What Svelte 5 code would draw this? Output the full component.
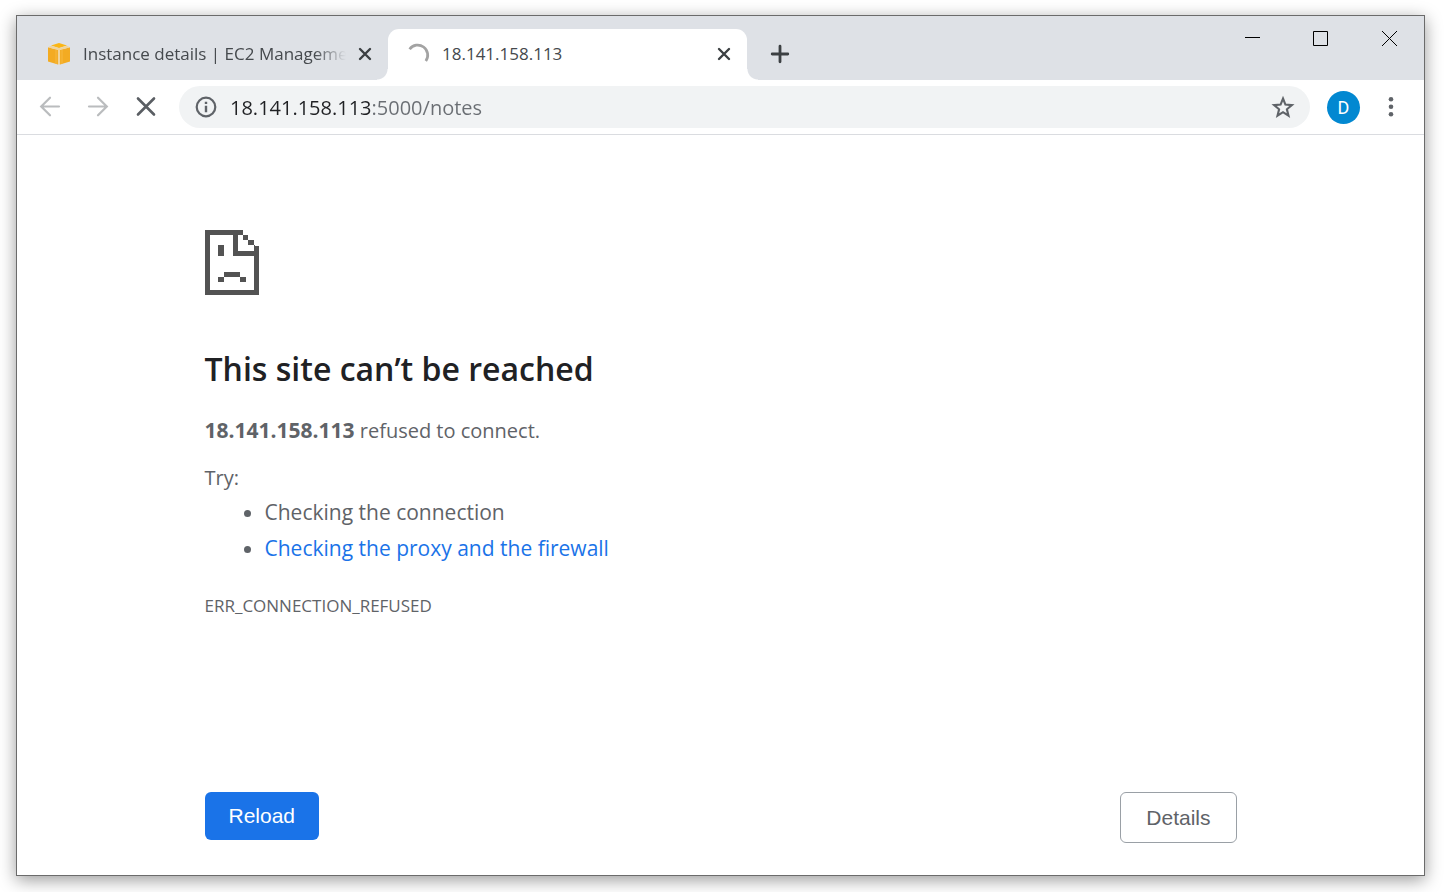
<script>
  let address = $state('18.141.158.113:5000/notes');
</script>

<div class="desktop">
  <div class="window">
    <header class="tabstrip">
      <div class="tab">
        <svg class="favicon" width="22" height="22" viewBox="0 0 22 22" aria-hidden="true">
          <path fill="#fbb615" d="M3 2.600 11 0l8 2.600-8 2.500z" />
          <path fill="#f3ab22" d="M0 4.200 10 7v14.600L0 18.600zM22 4.200 12 7v14.600l10-3z" />
          <path fill="#f1d49b" d="m0 4.200 3-1.400 8 2.500 8-2.500 3 1.400L12 7v14.600h-2V7z" />
          <path fill="#f6b83c" d="M7 6.200 9.500 7v14.200L7 20.400zM15 6.200l-2.500.8v14.200l2.500-.8z" opacity=".6" />
        </svg>
        <span class="title fade">Instance details | EC2 Manageme</span>
        <button class="close" aria-label="Close tab">
          <svg width="14" height="14" viewBox="0 0 14 14"><path d="m2 2 10 10M12 2 2 12" stroke="#3c4043" stroke-width="2.400" stroke-linecap="round" /></svg>
        </button>
      </div>
      <div class="tab active">
        <svg class="favicon" width="22" height="22" viewBox="0 0 22 22" aria-hidden="true">
          <path d="M2.600 6.200A9.800 9.800 0 0 1 18.800 18" fill="none" stroke="#a3a3a3" stroke-width="2.700" />
        </svg>
        <span class="title">18.141.158.113</span>
        <button class="close" aria-label="Close tab">
          <svg width="14" height="14" viewBox="0 0 14 14"><path d="m2 2 10 10M12 2 2 12" stroke="#3c4043" stroke-width="2.400" stroke-linecap="round" /></svg>
        </button>
      </div>
      <button class="newtab" aria-label="New tab">
        <svg width="18" height="18" viewBox="0 0 18 18"><path d="M9 1.200v15.600M1.200 9h15.600" stroke="#3c4043" stroke-width="2.800" stroke-linecap="round" /></svg>
      </button>
      <div class="controls">
        <button aria-label="Minimize"><svg width="15" height="15" viewBox="0 0 15 15"><path d="M1 6.500h15" stroke="#000" /></svg></button>
        <button aria-label="Maximize"><svg width="15" height="15" viewBox="0 0 15 15"><path d="M.5.5h14v14H.5z" fill="none" stroke="#000" /></svg></button>
        <button aria-label="Close"><svg width="15" height="15" viewBox="0 0 15 15"><path d="m0 0 15 15M15 0 0 15" stroke="#000" /></svg></button>
      </div>
    </header>

    <nav class="toolbar">
      <button class="nav" aria-label="Back">
        <svg width="20" height="20" viewBox="0 0 20 20"><path d="M19 9.500H1.500M10 .700 1.200 9.500l8.800 8.800" fill="none" stroke="#babcbe" stroke-width="2.200" stroke-linecap="round" /></svg>
      </button>
      <button class="nav" aria-label="Forward">
        <svg width="20" height="20" viewBox="0 0 20 20"><path d="M1 9.500h17.500M10 .700l8.800 8.800-8.800 8.800" fill="none" stroke="#babcbe" stroke-width="2.200" stroke-linecap="round" /></svg>
      </button>
      <button class="nav" aria-label="Stop loading">
        <svg width="20" height="20" viewBox="0 0 20 20"><path d="m2 1.500 16 16M18 1.500l-16 16" stroke="#5a5e63" stroke-width="2.600" stroke-linecap="round" /></svg>
      </button>
      <div class="omnibox">
        <button class="inline" aria-label="View site information">
          <svg width="22" height="22" viewBox="0 0 22 22"><circle cx="11" cy="11" r="9.300" fill="none" stroke="#5f6368" stroke-width="2.200" /><path d="M9.800 5.800h2.400V8H9.800zM9.800 9.700h2.400v6.500H9.800z" fill="#5f6368" /></svg>
        </button>
        <input type="text" aria-label="Address" spellcheck="false" bind:value={address} />
        <button class="inline" aria-label="Bookmark this page">
          <svg width="22" height="22" viewBox="0 0 22 22"><path d="m11 2.500 2.400 6.100 6.500.5-5 4.200 1.600 6.400-5.500-3.500-5.500 3.500 1.600-6.400-5-4.200 6.500-.5z" fill="none" stroke="#5f6368" stroke-width="2.100" /></svg>
        </button>
      </div>
      <button class="avatar" aria-label="Profile">D</button>
      <button class="menu" aria-label="Menu">
        <svg width="6" height="20" viewBox="0 0 6 20" fill="#5f6368"><circle cx="3" cy="2.300" r="2.300" /><circle cx="3" cy="9.700" r="2.300" /><circle cx="3" cy="17.200" r="2.300" /></svg>
      </button>
    </nav>

    <main>
      <svg class="sad" width="54" height="65" viewBox="0 0 54 65" fill="#535353" shape-rendering="crispEdges" aria-hidden="true">
        <path d="M0 0h38v5h-5v16h16v-5h5v49H0zM5 5v55h44V26H28V5z" fill-rule="evenodd" />
        <path d="M38 5h5v5h-5zM43 10h6v5h-6zM49 15h1v1h-1zM13 15h6v11h-6zM19 42h16v5H19zM13 47h6v5h-6zM35 47h6v5h-6z" />
      </svg>
      <h1>This site can’t be reached</h1>
      <p class="reason"><strong>18.141.158.113</strong> refused to connect.</p>
      <p class="try">Try:</p>
      <ul>
        <li>Checking the connection</li>
        <li><a href="#proxy">Checking the proxy and the firewall</a></li>
      </ul>
      <p class="code">ERR_CONNECTION_REFUSED</p>
      <div class="actions">
        <button class="reload">Reload</button>
        <button class="details">Details</button>
      </div>
    </main>
  </div>
</div>

<style>
  :global(body) {
    margin: 0;
    background: #fff;
  }
  .desktop {
    box-sizing: border-box;
    min-height: 100vh;
    display: flex;
    padding: 15px 19px 16px 16px;
    font-family: 'Open Sans', 'Noto Sans', sans-serif;
    color: #5f6368;
  }
  .window {
    flex: 1;
    min-width: 0;
    border: 1px solid #6b6b6b;
    background: #fff;
    box-shadow: 0 4px 16px rgba(0, 0, 0, 0.4);
  }
  button {
    display: flex;
    align-items: center;
    justify-content: center;
    padding: 0;
    border: 0;
    background: none;
    font: inherit;
    color: inherit;
  }
  svg {
    display: block;
    flex: none;
    overflow: visible;
  }
  .tabstrip {
    display: flex;
    align-items: flex-end;
    height: 64px;
    padding-left: 12px;
    background: #dee1e6;
  }
  .tab {
    position: relative;
    box-sizing: border-box;
    display: flex;
    align-items: center;
    flex: 0 1 359px;
    min-width: 0;
    height: 51px;
    padding: 0 16px 2px 19px;
  }
  .tab.active {
    border-radius: 11px 11px 0 0;
    background: #fff;
  }
  .tab.active::before,
  .tab.active::after {
    content: '';
    position: absolute;
    bottom: 0;
    width: 11px;
    height: 11px;
  }
  .tab.active::before {
    right: 100%;
    background: radial-gradient(circle at 0 0, transparent 10px, #fff 11px);
  }
  .tab.active::after {
    left: 100%;
    background: radial-gradient(circle at 100% 0, transparent 10px, #fff 11px);
  }
  .title {
    flex: 1;
    min-width: 0;
    margin: 0 12px 0 13px;
    overflow: hidden;
    white-space: nowrap;
    font-size: 17px;
    line-height: 24px;
    color: #45494d;
  }
  .fade {
    mask-image: linear-gradient(to right, #000 calc(100% - 32px), transparent);
  }
  .close {
    width: 14px;
    height: 24px;
  }
  .newtab {
    width: 32px;
    height: 51px;
    margin-left: 17px;
    padding-bottom: 2px;
  }
  .controls {
    display: flex;
    align-self: flex-start;
    margin-left: auto;
  }
  .controls button {
    width: 69px;
    height: 45px;
  }
  .toolbar {
    display: flex;
    align-items: center;
    height: 54px;
    padding: 0 19px 0 9px;
    border-bottom: 1px solid #dadce0;
  }
  .nav {
    width: 48px;
    height: 42px;
  }
  .omnibox {
    flex: 1;
    min-width: 0;
    display: flex;
    align-items: center;
    height: 42px;
    margin-left: 9px;
    padding: 0 16px;
    border-radius: 21px;
    background: #f1f3f4;
  }
  .inline {
    width: 22px;
    height: 22px;
  }
  input {
    flex: 1;
    min-width: 0;
    height: 32px;
    margin: 0 14px 0 13px;
    padding: 0;
    border: 0;
    outline: 0;
    font: inherit;
    font-size: 20px;
    color: transparent;
    caret-color: #202124;
    background: linear-gradient(to right, #202124 141px, #6a6e73 141px);
    background-clip: text;
  }
  .avatar {
    width: 33px;
    height: 33px;
    margin: 0 17px;
    border-radius: 50%;
    background: #0288d1;
    color: #fff;
    font-family: Roboto, sans-serif;
    font-size: 18px;
  }
  .menu {
    width: 28px;
    height: 33px;
  }
  main {
    max-width: 1032px;
    margin: 0 auto;
    padding: 95px 24px 32px;
  }
  h1 {
    margin: 50px 0 0;
    font-size: 32px;
    line-height: 48px;
    font-weight: 600;
    color: #202124;
  }
  p {
    margin: 0;
    font-size: 20px;
    line-height: 28px;
  }
  .reason {
    margin-top: 23px;
  }
  strong {
    font-size: 21px;
  }
  .try {
    margin-top: 19px;
  }
  ul {
    margin: 2px 0 0;
    padding-left: 60px;
    font-size: 21px;
    line-height: 36px;
  }
  a {
    color: #1a73e8;
    text-decoration: none;
  }
  .code {
    margin-top: 26px;
    font-size: 17px;
  }
  .actions {
    display: flex;
    justify-content: space-between;
    align-items: flex-start;
    margin-top: 172px;
    font-family: 'Liberation Sans', Arial, sans-serif;
    font-size: 21px;
  }
  .reload {
    height: 48px;
    padding: 0 24px;
    border-radius: 6px;
    background: #1a73e8;
    color: #fff;
  }
  .details {
    height: 51px;
    padding: 0 25px;
    border: 1px solid #9aa0a6;
    border-radius: 6px;
  }
</style>
